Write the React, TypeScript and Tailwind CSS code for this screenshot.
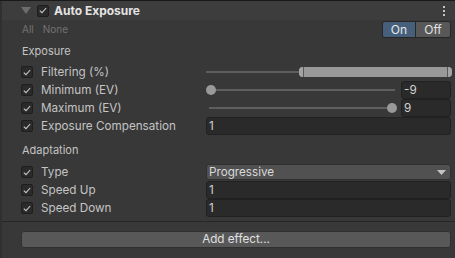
import React from "react";

const Check = () => (
  <div className="w-[12px] h-[12px] rounded-[2px] bg-[#2a2a2a] border border-[#1e1e1e] flex items-center justify-center">
    <svg width="8" height="7" viewBox="0 0 8 7" fill="none">
      <path d="M0.8 3.6 L3 5.7 L7.2 1" stroke="#c8c8c8" strokeWidth="1.1" />
    </svg>
  </div>
);

const Row = ({ label, children }: { label: string; children?: React.ReactNode }) => (
  <div className="h-[18px] flex items-center">
    <div className="w-[19px]" />
    <Check />
    <div className="ml-[8px] w-[165px] text-[11.7px] text-[#c4c4c4] pt-[1px]">{label}</div>
    <div className="flex-1 flex items-center pr-[4px] h-full">{children}</div>
  </div>
);

const Field = ({ v, className = "" }: { v: string; className?: string }) => (
  <div
    className={
      "h-[18px] bg-[#2a2a2a] border border-[#212121] rounded-[3px] px-[2px] pt-[1px] flex items-center text-[11.7px] text-[#d2d2d2] " +
      className
    }
  >
    {v}
  </div>
);

export default function App() {
  return (
    <div
      className="w-[455px] h-[258px] bg-[#383838] border-t border-[#1a1a1a] flex"
      style={{ fontFamily: "Inter, 'Noto Sans', sans-serif" }}
    >
      <div className="w-[2px] bg-[#303030]" />
      <div className="flex-1 flex flex-col">
        <div className="h-[19px] bg-[#3d3d3d] flex items-center">
          <div className="w-[19px]" />
          <svg width="10" height="8" viewBox="0 0 10 8">
            <path d="M0 0 H10 L5 7 Z" fill="#6c6c6c" />
          </svg>
          <div className="w-[6px]" />
          <Check />
          <div className="ml-[5px] text-[12px] font-bold text-[#e4e4e4]">Auto Exposure</div>
          <div className="flex-1" />
          <svg width="4" height="12" viewBox="0 0 4 12" className="mr-[9px]">
            <rect x="1" y="1" width="2" height="2" fill="#c4c4c4" />
            <rect x="1" y="5" width="2" height="2" fill="#c4c4c4" />
            <rect x="1" y="9" width="2" height="2" fill="#c4c4c4" />
          </svg>
        </div>
        <div className="h-[19px] flex items-center">
          <div className="ml-[20px] text-[10px] text-[#727272]">All</div>
          <div className="ml-[9px] text-[10px] text-[#727272]">None</div>
          <div className="flex-1" />
          <div className="mr-[4px] flex h-[17px] rounded-[3px] border border-[#262626] overflow-hidden text-[12px]">
            <div className="w-[33px] bg-[#46607c] text-[#e8e8e8] flex items-center justify-center border-r border-[#262626]">
              On
            </div>
            <div className="w-[34px] bg-[#585858] text-[#e0e0e0] flex items-center justify-center">Off</div>
          </div>
        </div>
        <div className="h-[24px] flex items-center pl-[20px] text-[11px] text-[#c4c4c4] pt-[1px]">Exposure</div>
        <Row label="Filtering (%)">
          <div className="flex-1 relative h-full flex items-center">
            <div className="absolute left-[0px] w-[95px] h-[2px] bg-[#5e5e5e]" />
            <div className="absolute left-[93px] right-[-1px] h-[10px] rounded-[4px] bg-[#999999] flex justify-between">
              <div className="w-[5px] h-full rounded-l-[4px] bg-[#a3a3a3] border-r border-[#5a5a5a]" />
              <div className="w-[5px] h-full rounded-r-[4px] bg-[#a3a3a3] border-l border-[#5a5a5a]" />
            </div>
          </div>
        </Row>
        <Row label="Minimum (EV)">
          <div className="flex-1 relative h-full flex items-center">
            <div className="absolute left-[3px] right-[2px] h-[2px] bg-[#5e5e5e]" />
            <div className="absolute left-[0px] w-[10px] h-[10px] rounded-full bg-[#999999]" />
          </div>
          <Field v="-9" className="w-[50px] ml-[4px]" />
        </Row>
        <Row label="Maximum (EV)">
          <div className="flex-1 relative h-full flex items-center">
            <div className="absolute left-[3px] right-[2px] h-[2px] bg-[#5e5e5e]" />
            <div className="absolute right-[0px] w-[10px] h-[10px] rounded-full bg-[#999999]" />
          </div>
          <Field v="9" className="w-[50px] ml-[4px]" />
        </Row>
        <Row label="Exposure Compensation">
          <Field v="1" className="flex-1" />
        </Row>
        <div className="h-[28px] flex items-center pt-[3px] pl-[20px] text-[11px] text-[#c4c4c4]">Adaptation</div>
        <Row label="Type">
          <div className="flex-1 h-[16px] bg-[#515151] rounded-[3px] border border-[#303030] flex items-center px-[2px] pt-[1px] text-[11.7px] text-[#d8d8d8]">
            <span className="flex-1">Progressive</span>
            <svg width="9" height="6" viewBox="0 0 9 6" className="mr-[2px]">
              <path d="M0 0 H9 L4.5 5 Z" fill="#c4c4c4" />
            </svg>
          </div>
        </Row>
        <Row label="Speed Up">
          <Field v="1" className="flex-1" />
        </Row>
        <Row label="Speed Down">
          <Field v="1" className="flex-1" />
        </Row>
        <div className="h-[4px]" />
        <div className="h-px bg-[#262626]" />
        <div className="h-[9px]" />
        <div className="flex pl-[19px] pr-[4px]">
          <div className="flex-1 h-[17px] bg-[#585858] rounded-[3px] border border-[#303030] flex items-center justify-center text-[11.7px] text-[#e0e0e0]">
            Add effect...
          </div>
        </div>
      </div>
    </div>
  );
}
